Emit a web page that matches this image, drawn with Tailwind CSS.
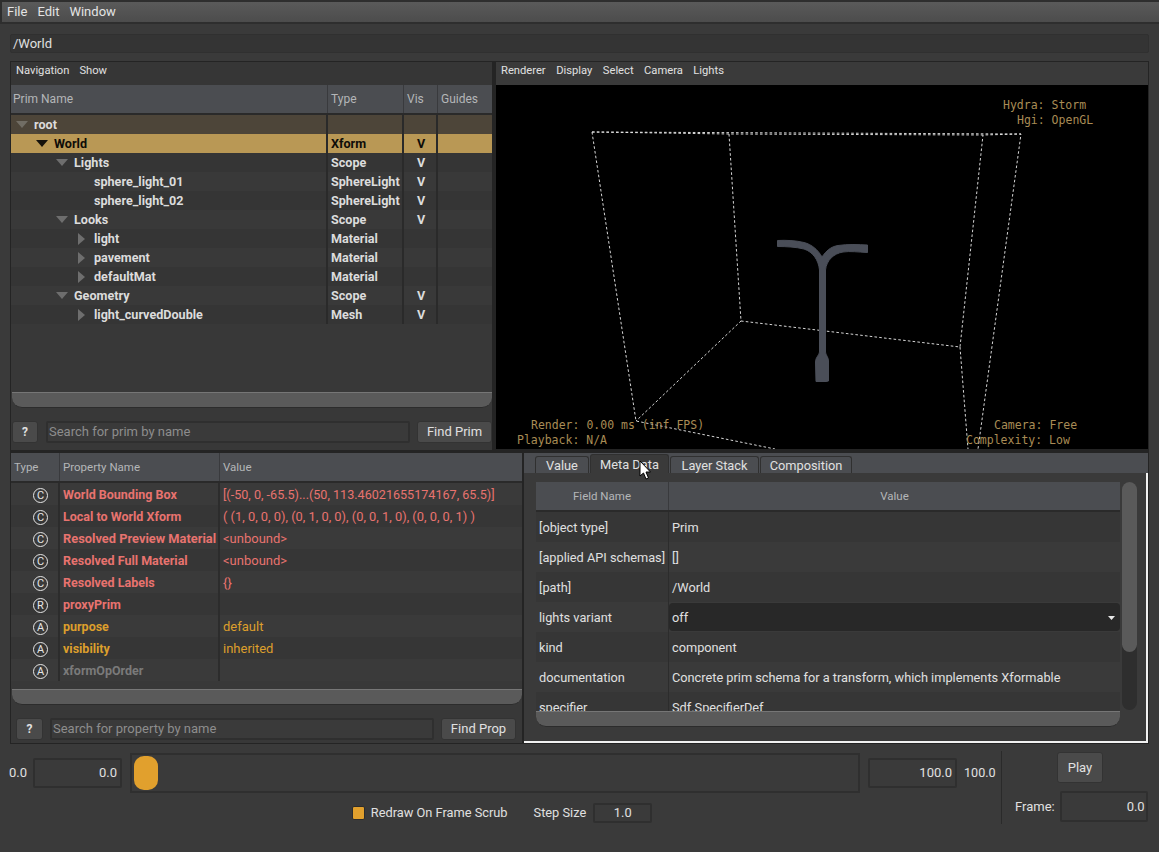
<!DOCTYPE html>
<html><head><meta charset="utf-8"><script src="https://cdn.jsdelivr.net/npm/@tailwindcss/browser@4"></script></head>
<body class="m-0 overflow-hidden">
<div class="relative w-[1159px] h-[852px] overflow-hidden bg-[#3a3a3a] text-[13px] text-[#e0e0e0] [font-family:Roboto,sans-serif]">

<!-- menu -->
<div class="pt-[2px] pl-[2px] bg-[#2e2e2e] pb-[2px]">
  <div class="h-[20px] flex items-center gap-[10px] pl-[5px] bg-gradient-to-b from-[#5a5a5a] to-[#4c4c4c] text-[13px] text-[#e4e4e4]"><span>File</span><span>Edit</span><span>Window</span></div>
</div>

<!-- path -->
<div class="mt-[10px] mx-[10px] h-[19px] flex items-center pl-[2px] bg-[#343434] border border-[#303030] rounded-[2px] text-[13px]">/World</div>

<!-- panels -->
<div class="mt-[8px] mx-[10px] h-[683px] bg-[#242424] p-[1px] flex flex-col gap-[3px]">
  <div class="flex gap-[4px] h-[388px]">
    <!-- prim browser -->
    <div class="w-[481px] bg-[#383838] flex flex-col">
      <div class="h-[23px] flex items-center gap-[10px] pl-[5px] pb-[4px] text-[11.2px] bg-[#363636]"><span>Navigation</span><span>Show</span></div>
      <div class="h-[30px] flex text-[#b4b6b8] text-[12px] bg-[#4b4d51] border-b-2 border-[#2a2a2a]">
        <div class="w-[317px] pl-[2px] flex items-center border-r border-[#393a3d]">Prim Name</div>
        <div class="w-[76px] pl-[3px] flex items-center border-r border-[#393a3d]">Type</div>
        <div class="w-[34px] pl-[3px] flex items-center border-r border-[#393a3d]">Vis</div>
        <div class="flex-1 pl-[3px] flex items-center">Guides</div>
      </div>
      <div class="text-[12.6px] font-bold h-[277px] text-[#dcdcdc] [&>div>div]:pt-[2px] [&_svg]:mt-[-2px]">
        <div class="h-[19px] flex bg-[#4d4539]">
          <div class="w-[317px] border-r-2 border-[#2a2a2a] flex items-center pl-[5px]"><svg class="w-[12px] h-[7px] mr-[6px]" viewBox="0 0 12 7"><path d="M0 0H12L6 7Z" fill="#716d64"/></svg>root</div>
          <div class="w-[76px] border-r-2 border-[#2a2a2a]"></div><div class="w-[34px] border-r-2 border-[#2a2a2a]"></div>
        </div>
        <div class="h-[19px] flex bg-[#b99855] text-[#0e0c08]">
          <div class="w-[317px] border-r-2 border-[#2a2a2a] flex items-center pl-[25px]"><svg class="w-[12px] h-[7px] mr-[6px]" viewBox="0 0 12 7"><path d="M0 0H12L6 7Z" fill="#15120c"/></svg>World</div>
          <div class="w-[76px] border-r-2 border-[#2a2a2a] flex items-center pl-[3px]">Xform</div><div class="w-[34px] border-r-2 border-[#2a2a2a] flex items-center justify-center pl-[2px]">V</div>
        </div>
        <div class="h-[19px] flex bg-[#353535]">
          <div class="w-[317px] border-r-2 border-[#2a2a2a] flex items-center pl-[45px]"><svg class="w-[12px] h-[7px] mr-[6px]" viewBox="0 0 12 7"><path d="M0 0H12L6 7Z" fill="#6e6e6e"/></svg>Lights</div>
          <div class="w-[76px] border-r-2 border-[#2a2a2a] flex items-center pl-[3px]">Scope</div><div class="w-[34px] border-r-2 border-[#2a2a2a] flex items-center justify-center pl-[2px]">V</div>
        </div>
        <div class="h-[19px] flex bg-[#393939]">
          <div class="w-[317px] border-r-2 border-[#2a2a2a] flex items-center pl-[83px]">sphere_light_01</div>
          <div class="w-[76px] border-r-2 border-[#2a2a2a] flex items-center pl-[3px]">SphereLight</div><div class="w-[34px] border-r-2 border-[#2a2a2a] flex items-center justify-center pl-[2px]">V</div>
        </div>
        <div class="h-[19px] flex bg-[#353535]">
          <div class="w-[317px] border-r-2 border-[#2a2a2a] flex items-center pl-[83px]">sphere_light_02</div>
          <div class="w-[76px] border-r-2 border-[#2a2a2a] flex items-center pl-[3px]">SphereLight</div><div class="w-[34px] border-r-2 border-[#2a2a2a] flex items-center justify-center pl-[2px]">V</div>
        </div>
        <div class="h-[19px] flex bg-[#393939]">
          <div class="w-[317px] border-r-2 border-[#2a2a2a] flex items-center pl-[45px]"><svg class="w-[12px] h-[7px] mr-[6px]" viewBox="0 0 12 7"><path d="M0 0H12L6 7Z" fill="#6e6e6e"/></svg>Looks</div>
          <div class="w-[76px] border-r-2 border-[#2a2a2a] flex items-center pl-[3px]">Scope</div><div class="w-[34px] border-r-2 border-[#2a2a2a] flex items-center justify-center pl-[2px]">V</div>
        </div>
        <div class="h-[19px] flex bg-[#353535]">
          <div class="w-[317px] border-r-2 border-[#2a2a2a] flex items-center pl-[67px]"><svg class="w-[7px] h-[12px] mr-[9px]" viewBox="0 0 7 12"><path d="M0 0V12L7 6Z" fill="#6e6e6e"/></svg>light</div>
          <div class="w-[76px] border-r-2 border-[#2a2a2a] flex items-center pl-[3px]">Material</div><div class="w-[34px] border-r-2 border-[#2a2a2a]"></div>
        </div>
        <div class="h-[19px] flex bg-[#393939]">
          <div class="w-[317px] border-r-2 border-[#2a2a2a] flex items-center pl-[67px]"><svg class="w-[7px] h-[12px] mr-[9px]" viewBox="0 0 7 12"><path d="M0 0V12L7 6Z" fill="#6e6e6e"/></svg>pavement</div>
          <div class="w-[76px] border-r-2 border-[#2a2a2a] flex items-center pl-[3px]">Material</div><div class="w-[34px] border-r-2 border-[#2a2a2a]"></div>
        </div>
        <div class="h-[19px] flex bg-[#353535]">
          <div class="w-[317px] border-r-2 border-[#2a2a2a] flex items-center pl-[67px]"><svg class="w-[7px] h-[12px] mr-[9px]" viewBox="0 0 7 12"><path d="M0 0V12L7 6Z" fill="#6e6e6e"/></svg>defaultMat</div>
          <div class="w-[76px] border-r-2 border-[#2a2a2a] flex items-center pl-[3px]">Material</div><div class="w-[34px] border-r-2 border-[#2a2a2a]"></div>
        </div>
        <div class="h-[19px] flex bg-[#393939]">
          <div class="w-[317px] border-r-2 border-[#2a2a2a] flex items-center pl-[45px]"><svg class="w-[12px] h-[7px] mr-[6px]" viewBox="0 0 12 7"><path d="M0 0H12L6 7Z" fill="#6e6e6e"/></svg>Geometry</div>
          <div class="w-[76px] border-r-2 border-[#2a2a2a] flex items-center pl-[3px]">Scope</div><div class="w-[34px] border-r-2 border-[#2a2a2a] flex items-center justify-center pl-[2px]">V</div>
        </div>
        <div class="h-[19px] flex bg-[#353535]">
          <div class="w-[317px] border-r-2 border-[#2a2a2a] flex items-center pl-[67px]"><svg class="w-[7px] h-[12px] mr-[9px]" viewBox="0 0 7 12"><path d="M0 0V12L7 6Z" fill="#6e6e6e"/></svg>light_curvedDouble</div>
          <div class="w-[76px] border-r-2 border-[#2a2a2a] flex items-center pl-[3px]">Mesh</div><div class="w-[34px] border-r-2 border-[#2a2a2a] flex items-center justify-center pl-[2px]">V</div>
        </div>
      </div>
      <div class="h-[16px] ml-[1px] bg-[#5a5a5a] border-t border-[#767676] rounded-b-[10px] border-b border-b-[#2c2c2c]"></div>
      <div class="flex items-center h-[42px] pl-[1px] pt-[6px] gap-[8px]">
        <div class="w-[26px] h-[22px] bg-[#4a4a4a] border border-[#333] rounded-[3px] flex items-center justify-center text-[12px] font-bold">?</div>
        <div class="w-[364px] h-[22px] bg-[#3a3a3a] border-2 border-[#2f2f2f] rounded-[2px] pl-[1px] flex items-center text-[#8d8d8d] text-[13px]">Search for prim by name</div>
        <div class="w-[75px] h-[22px] -ml-[1px] bg-[#4a4a4a] border border-[#333] rounded-[3px] flex items-center justify-center text-[13px]">Find Prim</div>
      </div>
    </div>
    <!-- viewport -->
    <div class="relative w-[652px] flex flex-col">
      <div class="h-[23px] bg-[#3a3a3a] flex items-center gap-[10.5px] pl-[5px] pb-[4px] text-[11.2px]"><span>Renderer</span><span>Display</span><span>Select</span><span>Camera</span><span>Lights</span></div>
      <div class="relative flex-1 mb-[1px] bg-black overflow-hidden [font-family:'DejaVu_Sans_Mono',monospace] text-[11.5px] leading-[15px] text-[#a98c55]">
        <svg class="absolute left-0 top-0" width="652" height="364" viewBox="496 85 652 364" fill="none">
          <g stroke="#eeeeee" stroke-width="0.9" stroke-dasharray="2.6 2.2">
            <path d="M592 132L1021 134L978 449"/>
            <path d="M592 132L636 421L775 449"/>
            <path d="M592 132L729 134L983 135L1021 134"/>
            <path d="M729 134L741 321L636 421"/>
            <path d="M741 321L960 347L983 135"/>
            <path d="M960 347L968 449"/>
          </g>
          <path d="M777.500 240.500C786 240 796 240.500 804 242.500C812 244.500 818 250 822 257C826 251 831 246.500 838 245.500C848 244 858 244.500 867.500 245L867.500 252.500C858 252 850 251 843 252C834 253.500 826.500 260 825.500 270L825.500 352C825.500 355 828.500 357 828.500 361L828.500 381L826 381.500L816 381.500L815.500 362C815.500 357 819.500 355 819.500 352L819.500 270C818.500 260 813 252 804 249C796 247 786 246.500 777.500 246.500Z" fill="#4a4e58" stroke="#4a4e58" stroke-width="1"/>
        </svg>
        <div class="absolute left-[507px] top-[13px] whitespace-pre">Hydra: Storm</div>
        <div class="absolute left-[521px] top-[28px] whitespace-pre">Hgi: OpenGL</div>
        <div class="absolute left-[35px] top-[333px] whitespace-pre">Render: 0.00 ms (inf FPS)</div>
        <div class="absolute left-[21px] top-[348px] whitespace-pre">Playback: N/A</div>
        <div class="absolute left-[498px] top-[333px] whitespace-pre">Camera: Free</div>
        <div class="absolute left-[470px] top-[348px] whitespace-pre">Complexity: Low</div>
      </div>
    </div>
  </div>

  <div class="flex gap-[2px] h-[290px]">
    <!-- properties -->
    <div class="w-[511px] bg-[#383838] flex flex-col">
      <div class="h-[30px] flex text-[#b4b6b8] text-[11.5px] bg-[#4b4d51] border-b-2 border-[#2a2a2a] [&>div]:pt-[1px]">
        <div class="w-[49px] pl-[3px] flex items-center border-r border-[#393a3d]">Type</div>
        <div class="w-[160px] pl-[3px] flex items-center border-r border-[#393a3d]">Property Name</div>
        <div class="flex-1 pl-[3px] flex items-center">Value</div>
      </div>
      <div class="h-[206px] text-[#e8736f] [&>div>div]:pt-[2px]">
        <div class="h-[22px] flex items-center bg-[#3a3a3a]"><div class="w-[49px] h-full flex items-center justify-center pl-[12px] border-r-2 border-[#2c2c2c]"><span class="w-[15px] h-[15px] rounded-full border border-[#e6e6e6] text-[#e6e6e6] text-[11px] leading-[13px] text-center">C</span></div><div class="w-[160px] h-full flex items-center pl-[3px] font-bold text-[12.5px] border-r-2 border-[#2c2c2c] whitespace-nowrap">World Bounding Box</div><div class="pl-[3px] text-[12.6px]">[(-50, 0, -65.5)...(50, 113.46021655174167, 65.5)]</div></div>
        <div class="h-[22px] flex items-center bg-[#363636]"><div class="w-[49px] h-full flex items-center justify-center pl-[12px] border-r-2 border-[#2c2c2c]"><span class="w-[15px] h-[15px] rounded-full border border-[#e6e6e6] text-[#e6e6e6] text-[11px] leading-[13px] text-center">C</span></div><div class="w-[160px] h-full flex items-center pl-[3px] font-bold text-[12.5px] border-r-2 border-[#2c2c2c] whitespace-nowrap">Local to World Xform</div><div class="pl-[3px] text-[12.85px]">( (1, 0, 0, 0), (0, 1, 0, 0), (0, 0, 1, 0), (0, 0, 0, 1) )</div></div>
        <div class="h-[22px] flex items-center bg-[#3a3a3a]"><div class="w-[49px] h-full flex items-center justify-center pl-[12px] border-r-2 border-[#2c2c2c]"><span class="w-[15px] h-[15px] rounded-full border border-[#e6e6e6] text-[#e6e6e6] text-[11px] leading-[13px] text-center">C</span></div><div class="w-[160px] h-full flex items-center pl-[3px] font-bold text-[12.85px] border-r-2 border-[#2c2c2c] whitespace-nowrap">Resolved Preview Material</div><div class="pl-[3px]">&lt;unbound&gt;</div></div>
        <div class="h-[22px] flex items-center bg-[#363636]"><div class="w-[49px] h-full flex items-center justify-center pl-[12px] border-r-2 border-[#2c2c2c]"><span class="w-[15px] h-[15px] rounded-full border border-[#e6e6e6] text-[#e6e6e6] text-[11px] leading-[13px] text-center">C</span></div><div class="w-[160px] h-full flex items-center pl-[3px] font-bold text-[12.5px] border-r-2 border-[#2c2c2c] whitespace-nowrap">Resolved Full Material</div><div class="pl-[3px]">&lt;unbound&gt;</div></div>
        <div class="h-[22px] flex items-center bg-[#3a3a3a]"><div class="w-[49px] h-full flex items-center justify-center pl-[12px] border-r-2 border-[#2c2c2c]"><span class="w-[15px] h-[15px] rounded-full border border-[#e6e6e6] text-[#e6e6e6] text-[11px] leading-[13px] text-center">C</span></div><div class="w-[160px] h-full flex items-center pl-[3px] font-bold text-[12.5px] border-r-2 border-[#2c2c2c] whitespace-nowrap">Resolved Labels</div><div class="pl-[3px]">{}</div></div>
        <div class="h-[22px] flex items-center bg-[#363636]"><div class="w-[49px] h-full flex items-center justify-center pl-[12px] border-r-2 border-[#2c2c2c]"><span class="w-[15px] h-[15px] rounded-full border border-[#e6e6e6] text-[#e6e6e6] text-[11px] leading-[13px] text-center">R</span></div><div class="w-[160px] h-full flex items-center pl-[3px] font-bold text-[12.5px] border-r-2 border-[#2c2c2c] whitespace-nowrap">proxyPrim</div></div>
        <div class="h-[22px] flex items-center bg-[#3a3a3a] text-[#dd9f2c]"><div class="w-[49px] h-full flex items-center justify-center pl-[12px] border-r-2 border-[#2c2c2c]"><span class="w-[15px] h-[15px] rounded-full border border-[#e6e6e6] text-[#e6e6e6] text-[11px] leading-[13px] text-center">A</span></div><div class="w-[160px] h-full flex items-center pl-[3px] font-bold text-[12.5px] border-r-2 border-[#2c2c2c] whitespace-nowrap">purpose</div><div class="pl-[3px]">default</div></div>
        <div class="h-[22px] flex items-center bg-[#363636] text-[#dd9f2c]"><div class="w-[49px] h-full flex items-center justify-center pl-[12px] border-r-2 border-[#2c2c2c]"><span class="w-[15px] h-[15px] rounded-full border border-[#e6e6e6] text-[#e6e6e6] text-[11px] leading-[13px] text-center">A</span></div><div class="w-[160px] h-full flex items-center pl-[3px] font-bold text-[12.5px] border-r-2 border-[#2c2c2c] whitespace-nowrap">visibility</div><div class="pl-[3px]">inherited</div></div>
        <div class="h-[22px] flex items-center bg-[#3a3a3a] text-[#7a7a7a]"><div class="w-[49px] h-full flex items-center justify-center pl-[12px] border-r-2 border-[#2c2c2c]"><span class="w-[15px] h-[15px] rounded-full border border-[#e6e6e6] text-[#e6e6e6] text-[11px] leading-[13px] text-center">A</span></div><div class="w-[160px] h-full flex items-center pl-[3px] font-bold text-[12.5px] border-r-2 border-[#2c2c2c] whitespace-nowrap">xformOpOrder</div></div>
      </div>
      <div class="h-[16px] ml-[1px] bg-[#5a5a5a] border-t border-[#767676] rounded-b-[10px] border-b border-b-[#2c2c2c]"></div>
      <div class="flex items-center h-[38px] pl-[5px] pt-[9px] gap-[7px]">
        <div class="w-[27px] h-[22px] bg-[#4a4a4a] border border-[#333] rounded-[3px] flex items-center justify-center text-[12px] font-bold">?</div>
        <div class="w-[384px] h-[22px] bg-[#3a3a3a] border-2 border-[#2f2f2f] rounded-[2px] pl-[1px] flex items-center text-[#8d8d8d] text-[13px]">Search for property by name</div>
        <div class="w-[75px] h-[22px] bg-[#4a4a4a] border border-[#333] rounded-[3px] flex items-center justify-center text-[13px]">Find Prop</div>
      </div>
    </div>
    <!-- metadata -->
    <div class="relative w-[624px] flex flex-col">
      <div class="h-[20px] bg-[#4b4d51] flex items-end pl-[11px] gap-[1px] text-[12.8px] [&>div]:pt-[2px]">
        <div class="w-[54px] h-[17px] bg-[#4b4d51] border border-b-0 border-[#303030] rounded-t-[3px] flex items-center justify-center">Value</div>
        <div class="w-[79px] h-[19px] bg-[#3a3a3a] border border-b-0 border-[#303030] rounded-t-[3px] flex items-center justify-center">Meta Data</div>
        <div class="w-[89px] h-[17px] bg-[#4b4d51] border border-b-0 border-[#303030] rounded-t-[3px] flex items-center justify-center">Layer Stack</div>
        <div class="w-[92px] h-[17px] bg-[#4b4d51] border border-b-0 border-[#303030] rounded-t-[3px] flex items-center justify-center">Composition</div>
      </div>
      <div class="flex-1 bg-[#3a3a3a] border-r-2 border-b-2 border-[#f2f2f2] pl-[12px] pt-[9px]">
        <div class="flex">
          <div class="w-[584px] flex flex-col">
            <div class="h-[229px] overflow-hidden text-[12.75px] [&>div>div]:pt-[2px]">
              <div class="h-[30px] flex text-[#b4b6b8] text-[11.5px] bg-[#4b4d51] border-b-2 border-[#2a2a2a]">
                <div class="w-[133px] flex items-center justify-center border-r border-[#393a3d]">Field Name</div>
                <div class="flex-1 flex items-center justify-center">Value</div>
              </div>
              <div class="h-[30px] flex bg-[#363636]"><div class="w-[133px] pl-[3px] flex items-center border-r border-[#2c2c2c] whitespace-nowrap">[object type]</div><div class="pl-[3px] flex items-center">Prim</div></div>
              <div class="h-[30px] flex bg-[#3a3a3a]"><div class="w-[133px] pl-[3px] flex items-center border-r border-[#2c2c2c] whitespace-nowrap">[applied API schemas]</div><div class="pl-[3px] flex items-center">[]</div></div>
              <div class="h-[30px] flex bg-[#363636]"><div class="w-[133px] pl-[3px] flex items-center border-r border-[#2c2c2c] whitespace-nowrap">[path]</div><div class="pl-[3px] flex items-center">/World</div></div>
              <div class="h-[30px] flex bg-[#3a3a3a]"><div class="w-[133px] pl-[3px] flex items-center border-r border-[#2c2c2c] whitespace-nowrap">lights variant</div><div class="flex-1 my-[1px] pl-[3px] pr-[5px] flex items-center justify-between bg-[#282828] rounded-[4px]"><span>off</span><svg class="w-[7px] h-[4px]" viewBox="0 0 7 4"><path d="M0 0H7L3.5 4Z" fill="#e8e8e8"/></svg></div></div>
              <div class="h-[30px] flex bg-[#363636]"><div class="w-[133px] pl-[3px] flex items-center border-r border-[#2c2c2c] whitespace-nowrap">kind</div><div class="pl-[3px] flex items-center">component</div></div>
              <div class="h-[30px] flex bg-[#3a3a3a]"><div class="w-[133px] pl-[3px] flex items-center border-r border-[#2c2c2c] whitespace-nowrap">documentation</div><div class="pl-[3px] flex items-center">Concrete prim schema for a transform, which implements Xformable</div></div>
              <div class="h-[30px] flex bg-[#363636]"><div class="w-[133px] pl-[3px] flex items-center border-r border-[#2c2c2c] whitespace-nowrap">specifier</div><div class="pl-[3px] flex items-center">Sdf.SpecifierDef</div></div>
            </div>
            <div class="h-[16px] bg-[#5a5a5a] border-t border-[#767676] rounded-b-[10px] border-b border-b-[#2c2c2c]"></div>
          </div>
          <div class="w-[15px] h-[228px] ml-[2px] bg-[#2e2e2e] rounded-[8px]"><div class="h-[170px] bg-[#5a5a5a] rounded-[8px]"></div></div>
        </div>
      </div>
    </div>
  </div>
</div>

<!-- timeline -->
<div class="flex pl-[9px] pr-[10px] mt-[7px] h-[73px]">
  <div class="w-[992px] flex flex-col">
    <div class="h-[40px] mt-[2px] flex items-center">
      <span class="w-[24px] shrink-0">0.0</span>
      <div class="w-[89px] h-[30px] shrink-0 bg-[#3a3a3a] border-2 border-[#2f2f2f] rounded-[2px] flex items-center justify-end pr-[3px]">0.0</div>
      <div class="w-[730px] h-[40px] shrink-0 ml-[8px] bg-[#3a3a3a] border-2 border-[#2f2f2f] pl-[2px] flex items-center"><div class="w-[24px] h-[34px] bg-[#e1a02d] rounded-[10px]"></div></div>
      <div class="w-[89px] h-[30px] shrink-0 ml-[8px] bg-[#3a3a3a] border-2 border-[#2f2f2f] rounded-[2px] flex items-center justify-end pr-[3px]">100.0</div>
      <span class="ml-[7px] shrink-0 text-[12.6px]">100.0</span>
    </div>
    <div class="mt-[10px] flex items-center justify-center pr-[6px] text-[12.8px]">
      <div class="w-[13px] h-[14px] rounded-[2px] bg-[#e1a02d] border border-[#2c2c2c]"></div>
      <span class="ml-[6px]">Redraw On Frame Scrub</span>
      <span class="ml-[26px]">Step Size</span>
      <div class="w-[59px] h-[20px] ml-[7px] bg-[#3a3a3a] border-2 border-[#2f2f2f] rounded-[2px] flex items-center justify-center">1.0</div>
    </div>
  </div>
  <div class="flex-1 border-l border-[#2a2a2a] flex flex-col">
    <div class="h-[31px] w-[46px] ml-[55px] mt-[1px] bg-[#4a4a4a] border border-[#333] rounded-[3px] flex items-center justify-center">Play</div>
    <div class="mt-[8px] flex items-center pl-[13px]"><span>Frame:</span><div class="w-[88px] h-[31px] ml-[5px] bg-[#3a3a3a] border-2 border-[#2f2f2f] rounded-[2px] flex items-center justify-end pr-[1px]">0.0</div></div>
  </div>
</div>

<!-- cursor -->
<svg class="absolute left-[639px] top-[460px]" width="13" height="20" viewBox="0 0 13 20"><path d="M1 1V16L4.500 13L7 19L9.500 18L7 12H11.500Z" fill="#fff" stroke="#000" stroke-width="1"/></svg>
</div>
</body></html>
